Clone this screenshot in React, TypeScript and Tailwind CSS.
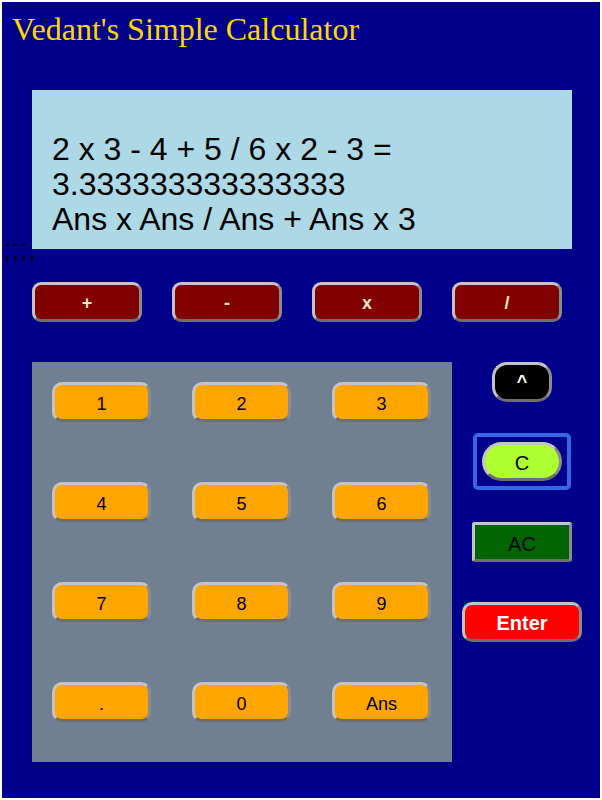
const sans = "font-['Liberation_Sans',Arial,sans-serif]";

const ops = ["+", "-", "x", "/"];
const keys = ["1", "2", "3", "4", "5", "6", "7", "8", "9", ".", "0", "Ans"];

// bevelled border shared by every key
const bevel =
  "border-[3px] border-t-[#c4c4c4] border-l-[#c4c4c4] border-r-[#8c8c8c] border-b-[#6e6e6e]";

export default function App() {
  return (
    <div className="h-[800px] w-full bg-white p-[2px]">
      <div className={`relative h-[796px] bg-[#00008b] ${sans}`}>
        {/* Title */}
        <h1 className="pl-[10px] pt-[9px] font-['Liberation_Serif','Times_New_Roman',serif] text-[32px] leading-[37px] text-[#ffd700]">
          Vedant's Simple Calculator
        </h1>

        {/* Display */}
        <div className="ml-[30px] mt-[42px] h-[159px] w-[540px] bg-[#add8e6] pl-[20px] pt-[42px] text-[32px] leading-[35px] text-black">
          <div>2 x 3 - 4 + 5 / 6 x 2 - 3 =</div>
          <div>3.333333333333333</div>
          <div>Ans x Ans / Ans + Ans x 3</div>
        </div>

        {/* stray punctuation left of the display */}
        <div className="absolute left-[3px] top-[232px] text-[17px] font-black leading-[13px] tracking-[3.5px] text-black">
          <div>...</div>
          <div>,,,,</div>
        </div>

        {/* Operator row */}
        <div className="ml-[30px] mt-[33px] flex gap-[30px]">
          {ops.map((o) => (
            <button
              key={o}
              className={`flex h-[40px] w-[110px] items-center justify-center rounded-[9px] bg-[#800000] pt-[2px] text-[18px] font-bold text-[#ffe4c4] ${bevel}`}
            >
              {o}
            </button>
          ))}
        </div>

        {/* Keypad + side keys */}
        <div className="ml-[30px] mt-[40px] flex">
          <div className="grid h-[400px] w-[420px] grid-cols-[repeat(3,100px)] content-start gap-x-[40px] gap-y-[60px] bg-[#708090] p-[20px]">
            {keys.map((k) => (
              <button
                key={k}
                className={`flex h-[40px] w-[99px] items-center justify-center rounded-[10px] bg-[#ffa500] pt-[4px] text-[18px] text-black ${bevel}`}
              >
                {k}
              </button>
            ))}
          </div>

          <div className="flex w-[140px] flex-col items-center">
            <button
              className={`flex h-[40px] w-[60px] items-center justify-center rounded-[15px] bg-black text-[18px] font-bold text-white ${bevel}`}
            >
              ^
            </button>
            <div className="mt-[31px] rounded-[5px] border-[4px] border-[#3567e6] p-[5px]">
              <button
                className={`flex h-[39px] w-[80px] items-center justify-center rounded-full bg-[#adff2f] pt-[3px] text-[20px] text-black ${bevel}`}
              >
                C
              </button>
            </div>
            <button
              className={`mt-[32px] flex h-[40px] w-[100px] items-center justify-center rounded-[3px] bg-[#006400] pt-[3px] text-[20px] text-black ${bevel}`}
            >
              AC
            </button>
            <button
              className={`mt-[40px] flex h-[40px] w-[120px] items-center justify-center rounded-[10px] bg-[#ff0000] pt-[2px] text-[20px] font-bold text-white ${bevel}`}
            >
              Enter
            </button>
          </div>
        </div>
      </div>
    </div>
  );
}
